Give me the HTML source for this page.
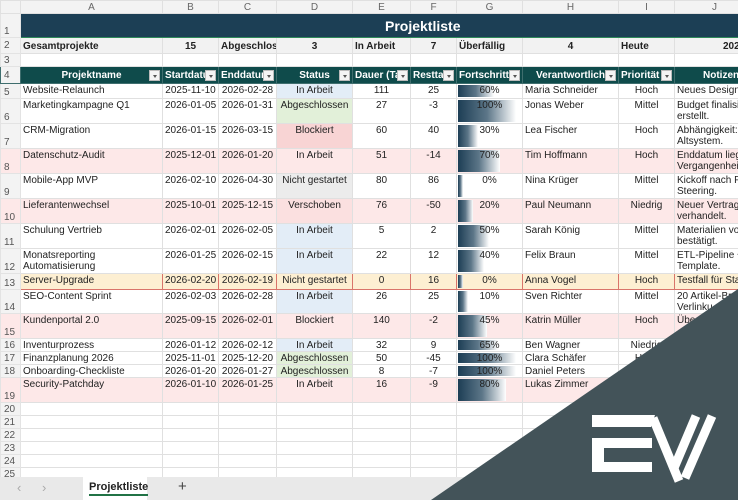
<!DOCTYPE html>
<html><head><meta charset="utf-8"><style>
*{margin:0;padding:0;box-sizing:border-box}
body{width:738px;height:500px;overflow:hidden;background:#fff;font-family:"Liberation Sans",sans-serif;font-size:10px;color:#222;position:relative}
table{border-collapse:collapse;table-layout:fixed;position:absolute;left:0;top:0;width:754px}
td{border:1px solid #e0e0e0;white-space:nowrap;overflow:hidden;vertical-align:top;padding:1px 2px 0 2px;line-height:11px;position:relative}
td.rh{background:#f3f3f3;color:#555;text-align:left;vertical-align:bottom;padding:0 0 0 3px;border-color:#e3e3e3}
tr.ch td{background:#f3f3f3;color:#666;text-align:center;font-size:10px;vertical-align:middle;padding:0;line-height:11px}
.c{text-align:center}.r{text-align:right}
tr.r2 td{background:#f2f2f2;font-weight:bold;vertical-align:middle}
tr.hd td{background:#0f4b4b;color:#fff;font-weight:bold;text-align:center;vertical-align:middle;border-color:#3f6e6e}
.fb{position:absolute;right:2px;top:3px;width:11px;height:11px;background:#f4f4f4;border:1px solid #bbb}
.fb:after{content:"";position:absolute;left:3px;top:4px;border-left:2px solid transparent;border-right:2px solid transparent;border-top:3px solid #555}
.pk td{background:#fde8e8}
.ia{background:#e3edf7!important}.ab{background:#e2f0d9!important}.bl{background:#f8d4d4!important}.ng{background:#ececec!important}.vs{background:#fbe0e0!important}
.hl td{background:#fdefd2;border-color:#d9746a}
.bar{position:absolute;left:1px;top:1px;bottom:1px;background:linear-gradient(90deg,#1d3e55,#5c7688 50%,#fff)}
.pt{position:relative;text-align:center;display:block}
</style></head><body>
<table>
<colgroup><col style="width:20px"><col style="width:142px"><col style="width:56px"><col style="width:58px"><col style="width:76px"><col style="width:58px"><col style="width:46px"><col style="width:66px"><col style="width:96px"><col style="width:56px"><col style="width:80px"></colgroup>
<tr class="ch" style="height:13px"><td></td><td>A</td><td>B</td><td>C</td><td>D</td><td>E</td><td>F</td><td>G</td><td>H</td><td>I</td><td>J</td></tr>
<tr style="height:24px"><td class="rh">1</td><td colspan="10" style="background:#1c3f55;border:1px solid #2f8a5a;color:#fff;font-weight:bold;font-size:14px;vertical-align:middle;padding-left:364px;line-height:16px">Projektliste</td></tr>
<tr class="r2" style="height:16px"><td class="rh" style="background:#f3f3f3;font-weight:normal">2</td><td>Gesamtprojekte</td><td class="c">15</td><td>Abgeschlosse</td><td class="c">3</td><td>In Arbeit</td><td class="c">7</td><td>Überfällig</td><td class="c">4</td><td>Heute</td><td style="padding-left:48px">2026</td></tr>
<tr style="height:13px"><td class="rh">3</td><td></td><td></td><td></td><td></td><td></td><td></td><td></td><td></td><td></td><td></td></tr>
<tr class="hd" style="height:17px"><td class="rh" style="background:#f3f3f3;color:#555;font-weight:normal;text-align:left">4</td><td>Projektname<span class="fb"></span></td><td style="text-align:left">Startdatu<span class="fb"></span></td><td style="text-align:left">Enddatur<span class="fb"></span></td><td>Status<span class="fb"></span></td><td style="text-align:left">Dauer (Tag<span class="fb"></span></td><td style="text-align:left">Resttag<span class="fb"></span></td><td style="text-align:left">Fortschritt<span class="fb"></span></td><td>Verantwortlich<span class="fb"></span></td><td style="text-align:left">Priorität<span class="fb"></span></td><td style="text-align:left;padding-left:28px">Notizen</td></tr>
<tr style="height:15px"><td class="rh">5</td><td>Website-Relaunch</td><td class="c">2025-11-10</td><td class="c">2026-02-28</td><td class="c ia">In Arbeit</td><td class="c">111</td><td class="c">25</td><td><span class="bar" style="width:36px"></span><span class="pt">60%</span></td><td>Maria Schneider</td><td class="c">Hoch</td><td>Neues Design +</td></tr>
<tr style="height:25px"><td class="rh">6</td><td>Marketingkampagne Q1</td><td class="c">2026-01-05</td><td class="c">2026-01-31</td><td class="c ab">Abgeschlossen</td><td class="c">27</td><td class="c">-3</td><td><span class="bar" style="width:58px"></span><span class="pt">100%</span></td><td>Jonas Weber</td><td class="c">Mittel</td><td>Budget finalisie<br>erstellt.</td></tr>
<tr style="height:25px"><td class="rh">7</td><td>CRM-Migration</td><td class="c">2026-01-15</td><td class="c">2026-03-15</td><td class="c bl">Blockiert</td><td class="c">60</td><td class="c">40</td><td><span class="bar" style="width:20px"></span><span class="pt">30%</span></td><td>Lea Fischer</td><td class="c">Hoch</td><td>Abhängigkeit: D<br>Altsystem.</td></tr>
<tr class="pk" style="height:25px"><td class="rh">8</td><td>Datenschutz-Audit</td><td class="c">2025-12-01</td><td class="c">2026-01-20</td><td class="c">In Arbeit</td><td class="c">51</td><td class="c">-14</td><td><span class="bar" style="width:42px"></span><span class="pt">70%</span></td><td>Tim Hoffmann</td><td class="c">Hoch</td><td>Enddatum liegt<br>Vergangenheit</td></tr>
<tr style="height:25px"><td class="rh">9</td><td>Mobile-App MVP</td><td class="c">2026-02-10</td><td class="c">2026-04-30</td><td class="c ng">Nicht gestartet</td><td class="c">80</td><td class="c">86</td><td><span class="bar" style="width:5px"></span><span class="pt">0%</span></td><td>Nina Krüger</td><td class="c">Mittel</td><td>Kickoff nach Pri<br>Steering.</td></tr>
<tr class="pk" style="height:25px"><td class="rh">10</td><td>Lieferantenwechsel</td><td class="c">2025-10-01</td><td class="c">2025-12-15</td><td class="c vs">Verschoben</td><td class="c">76</td><td class="c">-50</td><td><span class="bar" style="width:15px"></span><span class="pt">20%</span></td><td>Paul Neumann</td><td class="c">Niedrig</td><td>Neuer Vertrag v<br>verhandelt.</td></tr>
<tr style="height:25px"><td class="rh">11</td><td>Schulung Vertrieb</td><td class="c">2026-02-01</td><td class="c">2026-02-05</td><td class="c ia">In Arbeit</td><td class="c">5</td><td class="c">2</td><td><span class="bar" style="width:31px"></span><span class="pt">50%</span></td><td>Sarah König</td><td class="c">Mittel</td><td>Materialien vor<br>bestätigt.</td></tr>
<tr style="height:25px"><td class="rh">12</td><td>Monatsreporting<br>Automatisierung</td><td class="c">2026-01-25</td><td class="c">2026-02-15</td><td class="c ia">In Arbeit</td><td class="c">22</td><td class="c">12</td><td><span class="bar" style="width:26px"></span><span class="pt">40%</span></td><td>Felix Braun</td><td class="c">Mittel</td><td>ETL-Pipeline + D<br>Template.</td></tr>
<tr class="hl" style="height:16px"><td class="rh" style="background:#f3f3f3;border-color:#e3e3e3">13</td><td>Server-Upgrade</td><td class="c">2026-02-20</td><td class="c">2026-02-19</td><td class="c">Nicht gestartet</td><td class="c">0</td><td class="c">16</td><td><span class="bar" style="width:5px"></span><span class="pt">0%</span></td><td>Anna Vogel</td><td class="c">Hoch</td><td>Testfall für Star</td></tr>
<tr style="height:24px"><td class="rh">14</td><td>SEO-Content Sprint</td><td class="c">2026-02-03</td><td class="c">2026-02-28</td><td class="c ia">In Arbeit</td><td class="c">26</td><td class="c">25</td><td><span class="bar" style="width:10px"></span><span class="pt">10%</span></td><td>Sven Richter</td><td class="c">Mittel</td><td>20 Artikel-Br<br>Verlinku</td></tr>
<tr class="pk" style="height:25px"><td class="rh">15</td><td>Kundenportal 2.0</td><td class="c">2025-09-15</td><td class="c">2026-02-01</td><td class="c">Blockiert</td><td class="c">140</td><td class="c">-2</td><td><span class="bar" style="width:29px"></span><span class="pt">45%</span></td><td>Katrin Müller</td><td class="c">Hoch</td><td>Übe</td></tr>
<tr style="height:13px"><td class="rh">16</td><td>Inventurprozess</td><td class="c">2026-01-12</td><td class="c">2026-02-12</td><td class="c ia">In Arbeit</td><td class="c">32</td><td class="c">9</td><td><span class="bar" style="width:40px"></span><span class="pt">65%</span></td><td>Ben Wagner</td><td class="c">Niedrig</td><td></td></tr>
<tr style="height:13px"><td class="rh">17</td><td>Finanzplanung 2026</td><td class="c">2025-11-01</td><td class="c">2025-12-20</td><td class="c ab">Abgeschlossen</td><td class="c">50</td><td class="c">-45</td><td><span class="bar" style="width:58px"></span><span class="pt">100%</span></td><td>Clara Schäfer</td><td class="c">Hoch</td><td></td></tr>
<tr style="height:13px"><td class="rh">18</td><td>Onboarding-Checkliste</td><td class="c">2026-01-20</td><td class="c">2026-01-27</td><td class="c ab">Abgeschlossen</td><td class="c">8</td><td class="c">-7</td><td><span class="bar" style="width:58px"></span><span class="pt">100%</span></td><td>Daniel Peters</td><td class="c">Mittel</td><td></td></tr>
<tr class="pk" style="height:25px"><td class="rh">19</td><td>Security-Patchday</td><td class="c">2026-01-10</td><td class="c">2026-01-25</td><td class="c">In Arbeit</td><td class="c">16</td><td class="c">-9</td><td><span class="bar" style="width:48px"></span><span class="pt">80%</span></td><td>Lukas Zimmer</td><td class="c">Hoch</td><td></td></tr>
<tr style="height:13px"><td class="rh">20</td><td></td><td></td><td></td><td></td><td></td><td></td><td></td><td></td><td></td><td></td></tr>
<tr style="height:13px"><td class="rh">21</td><td></td><td></td><td></td><td></td><td></td><td></td><td></td><td></td><td></td><td></td></tr>
<tr style="height:13px"><td class="rh">22</td><td></td><td></td><td></td><td></td><td></td><td></td><td></td><td></td><td></td><td></td></tr>
<tr style="height:13px"><td class="rh">23</td><td></td><td></td><td></td><td></td><td></td><td></td><td></td><td></td><td></td><td></td></tr>
<tr style="height:13px"><td class="rh">24</td><td></td><td></td><td></td><td></td><td></td><td></td><td></td><td></td><td></td><td></td></tr>
<tr style="height:13px"><td class="rh">25</td><td></td><td></td><td></td><td></td><td></td><td></td><td></td><td></td><td></td><td></td></tr>
</table>
<div style="position:absolute;left:0;top:477px;width:738px;height:23px;background:#e9e9e9"></div>
<div style="position:absolute;left:17px;top:480px;color:#aaa;font-size:13px">&lsaquo;</div>
<div style="position:absolute;left:42px;top:480px;color:#aaa;font-size:13px">&rsaquo;</div>
<div style="position:absolute;left:83px;top:477px;width:64px;height:23px;background:#fff"></div>
<div style="position:absolute;left:89px;top:481px;font-weight:bold;font-size:11px;color:#222;border-bottom:2px solid #217346;padding-bottom:1px">Projektliste</div>
<div style="position:absolute;left:178px;top:478px;font-size:15px;color:#444">+</div>
<svg style="position:absolute;left:0;top:0" width="738" height="500">
<polygon points="431,500 738,289 738,500" fill="#435359"/>
<g fill="#fff">
<polygon points="592,415 655,415 651,427 592,427"/>
<polygon points="592,438 652,438 652,448 604,448 604,462 652,462 652,472 592,472"/>
</g>
<g stroke="#fff" stroke-width="9" fill="none">
<line x1="653" y1="418" x2="679" y2="481"/>
<line x1="696" y1="416" x2="674" y2="468"/>
<line x1="712" y1="416" x2="685" y2="478"/>
</g>
</svg>
</body></html>
